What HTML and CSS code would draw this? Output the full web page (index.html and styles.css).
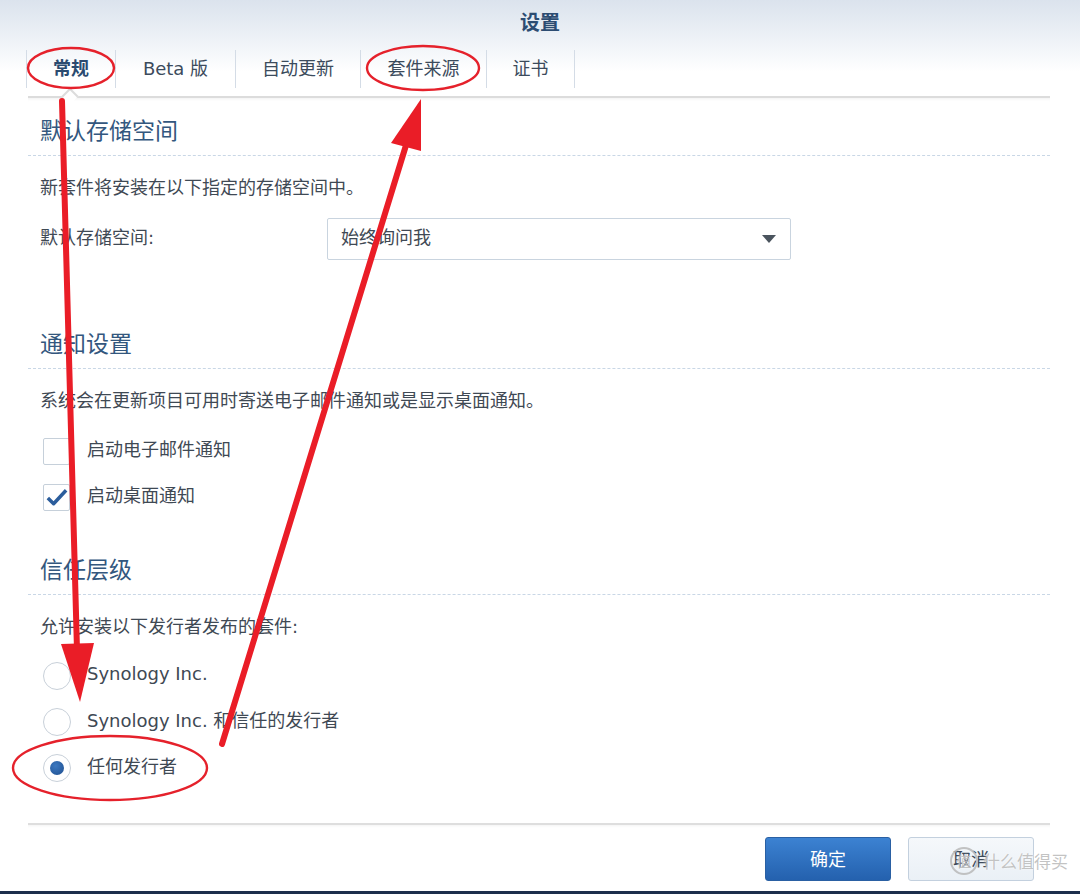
FILE: index.html
```html
<!DOCTYPE html>
<html lang="zh-CN">
<head>
    <meta charset="UTF-8">
    <title>设置</title>
    <link rel="stylesheet" href="styles.css">
</head>
<body>
    <div class="window">
        <div class="top">
            <div class="title">设置</div>
            <div class="tabs">
                <div class="tab active" style="width: 90px">常规</div>
                <div class="tab" style="width: 120px">Beta 版</div>
                <div class="tab" style="width: 125px">自动更新</div>
                <div class="tab" style="width: 126px">套件来源</div>
                <div class="tab" style="width: 88px">证书</div>
            </div>
        </div>

        <div class="panel">
            <span class="notch"></span>

            <h2 class="section-title">默认存储空间</h2>
            <p class="desc">新套件将安装在以下指定的存储空间中。</p>
            <div class="field-row">
                <label class="field-label">默认存储空间:</label>
                <div class="select">
                    <span class="txt">始终询问我</span>
                    <span class="caret"></span>
                </div>
            </div>

            <h2 class="section-title second">通知设置</h2>
            <p class="desc">系统会在更新项目可用时寄送电子邮件通知或是显示桌面通知。</p>
            <div class="check-row first">
                <span class="checkbox"></span>
                <span class="txt">启动电子邮件通知</span>
            </div>
            <div class="check-row">
                <span class="checkbox">
                    <svg width="26" height="22" viewBox="0 0 26 22">
                        <path d="M4 12 L10 18 L23 4" fill="none" stroke="#2b5d9c" stroke-width="3.6" stroke-linejoin="round"/>
                    </svg>
                </span>
                <span class="txt">启动桌面通知</span>
            </div>

            <h2 class="section-title third">信任层级</h2>
            <p class="desc">允许安装以下发行者发布的套件:</p>
            <div class="radio-list">
                <div class="radio-row"><span class="radio"></span><span class="txt">Synology Inc.</span></div>
                <div class="radio-row"><span class="radio"></span><span class="txt">Synology Inc. 和信任的发行者</span></div>
                <div class="radio-row"><span class="radio checked"></span><span class="txt">任何发行者</span></div>
            </div>
        </div>

        <div class="footer">
            <button class="btn primary">确定</button>
            <button class="btn">取消</button>
        </div>
        <div class="bottom-bar"></div>

        <div class="watermark"><span class="wm-icon">值</span>什么值得买</div>

        <svg class="marks" width="1080" height="894" viewBox="0 0 1080 894">
            <g fill="none" stroke="#e5212b" stroke-width="2.4">
                <ellipse cx="71" cy="68" rx="43" ry="20"/>
                <ellipse cx="423" cy="68" rx="56" ry="22"/>
                <ellipse cx="110" cy="768" rx="97" ry="32"/>
            </g>
            <g stroke="#ea1d27" stroke-width="6" stroke-linecap="round">
                <line x1="62" y1="101" x2="77" y2="650"/>
                <line x1="222" y1="744" x2="407" y2="142"/>
            </g>
            <g fill="#ea1d27">
                <polygon points="61,644 94,643 80,702"/>
                <polygon points="391,143 421,151 421,99"/>
            </g>
        </svg>
    </div>
</body>
</html>
```

FILE: styles.css
```css
* {
    margin: 0;
    padding: 0;
    box-sizing: border-box;
}

body {
    background: #fff;
    font-family: "DejaVu Sans", "Noto Sans CJK SC", sans-serif;
    color: #3f4954;
}

.window {
    position: relative;
    width: 1080px;
    height: 894px;
    overflow: hidden;
    background: #fff;
}

.top {
    background: linear-gradient(#dbe3ed, #eef2f7 40px, #fff 72px);
    height: 96px;
}

.title {
    height: 48px;
    line-height: 46px;
    text-align: center;
    font-size: 20px;
    font-weight: 700;
    color: #2c4c72;
}

.tabs {
    display: flex;
    padding-left: 26px;
    padding-top: 2px;
}

.tab {
    height: 38px;
    line-height: 37px;
    padding-bottom: 1px;
    text-align: center;
    font-size: 18px;
    color: #3c4b5c;
    border-right: 1px solid #d4dce6;
}

.tab.active {
    border-left: 1px solid #d4dce6;
    font-weight: 700;
    color: #2b4b70;
}

.panel {
    position: relative;
    margin: 0 30px 0 28px;
    height: 727px;
    padding: 13px 0 0 12px;
    border-top: 2px solid #dcdcdc;
    box-shadow: inset 0 3px 3px -2px rgba(0, 0, 0, 0.06);
}

.notch {
    position: absolute;
    top: -8px;
    left: 36px;
    width: 12px;
    height: 12px;
    background: #fff;
    border-left: 2px solid #dcdcdc;
    border-top: 2px solid #dcdcdc;
    transform: rotate(45deg);
}

.section-title {
    height: 45px;
    line-height: 40px;
    padding-bottom: 4px;
    font-size: 23px;
    font-weight: 400;
    color: #33577e;
    border-bottom: 1px dashed #c9d7e6;
    margin-left: -12px;
    padding-left: 12px;
}

.section-title.second {
    margin-top: 64px;
}

.section-title.third {
    margin-top: 35px;
}

.desc {
    margin-top: 16px;
    height: 36px;
    line-height: 32px;
    padding-bottom: 4px;
    font-size: 18px;
}

.txt {
    padding-bottom: 6px;
}

.field-row {
    display: flex;
    align-items: center;
    margin-top: 10px;
    height: 42px;
    font-size: 18px;
}

.field-label {
    width: 287px;
    padding-bottom: 6px;
}

.select {
    width: 464px;
    height: 42px;
    border: 1px solid #c9d4df;
    border-radius: 2px;
    display: flex;
    align-items: center;
    justify-content: space-between;
    padding: 0 14px 0 13px;
    font-size: 18px;
}

.caret {
    width: 0;
    height: 0;
    border-left: 7px solid transparent;
    border-right: 7px solid transparent;
    border-top: 8px solid #4b545e;
}

.check-row {
    display: flex;
    align-items: center;
    gap: 17px;
    height: 36px;
    margin-top: 10px;
    font-size: 18px;
}

.check-row.first {
    margin-top: 12px;
}

.checkbox {
    width: 27px;
    height: 27px;
    margin-left: 3px;
    border: 1px solid #c6d0da;
    border-radius: 2px;
    background: #fff;
    display: flex;
    align-items: center;
    justify-content: center;
}

.radio-list {
    margin-top: 6px;
}

.radio-row {
    display: flex;
    align-items: center;
    gap: 16px;
    height: 46px;
    font-size: 18px;
}

.radio {
    width: 28px;
    height: 28px;
    margin-left: 3px;
    border: 1px solid #c8d0d9;
    border-radius: 50%;
    background: #fff;
    display: flex;
    align-items: center;
    justify-content: center;
}

.radio.checked::after {
    content: "";
    width: 14px;
    height: 14px;
    border-radius: 50%;
    background: radial-gradient(circle at 40% 35%, #3c78c0, #1f4f8f);
}

.footer {
    margin: 0 30px 0 28px;
    height: 68px;
    border-top: 2px solid #dedede;
    box-shadow: inset 0 3px 3px -2px rgba(0, 0, 0, 0.05);
    display: flex;
    justify-content: flex-end;
    align-items: flex-start;
    gap: 17px;
    padding: 12px 16px 0 0;
}

.btn {
    width: 126px;
    height: 44px;
    border: 1px solid #c3d0de;
    border-radius: 3px;
    background: linear-gradient(#f5f8fb, #eaf0f6);
    font-family: "Noto Sans CJK SC", sans-serif;
    font-size: 18px;
    padding-bottom: 3px;
    color: #3c4a5a;
}

.btn.primary {
    border-color: #2a60a3;
    background: linear-gradient(#3c82d2, #2461ae);
    color: #fff;
}

.bottom-bar {
    position: absolute;
    left: 0;
    right: 0;
    bottom: 0;
    height: 3px;
    background: #1d2f4c;
}

.watermark {
    position: absolute;
    left: 950px;
    top: 847px;
    display: flex;
    align-items: center;
    gap: 5px;
    white-space: nowrap;
    font-family: "Noto Sans CJK SC", sans-serif;
    font-size: 17px;
    line-height: 28px;
    color: rgba(185, 185, 185, 0.85);
    text-shadow: 0 0 2px #fff;
}

.wm-icon {
    width: 28px;
    height: 28px;
    border: 2px solid rgba(185, 185, 185, 0.85);
    border-radius: 50%;
    font-size: 15px;
    line-height: 23px;
    text-align: center;
}

.marks {
    position: absolute;
    left: 0;
    top: 0;
    pointer-events: none;
}
```
